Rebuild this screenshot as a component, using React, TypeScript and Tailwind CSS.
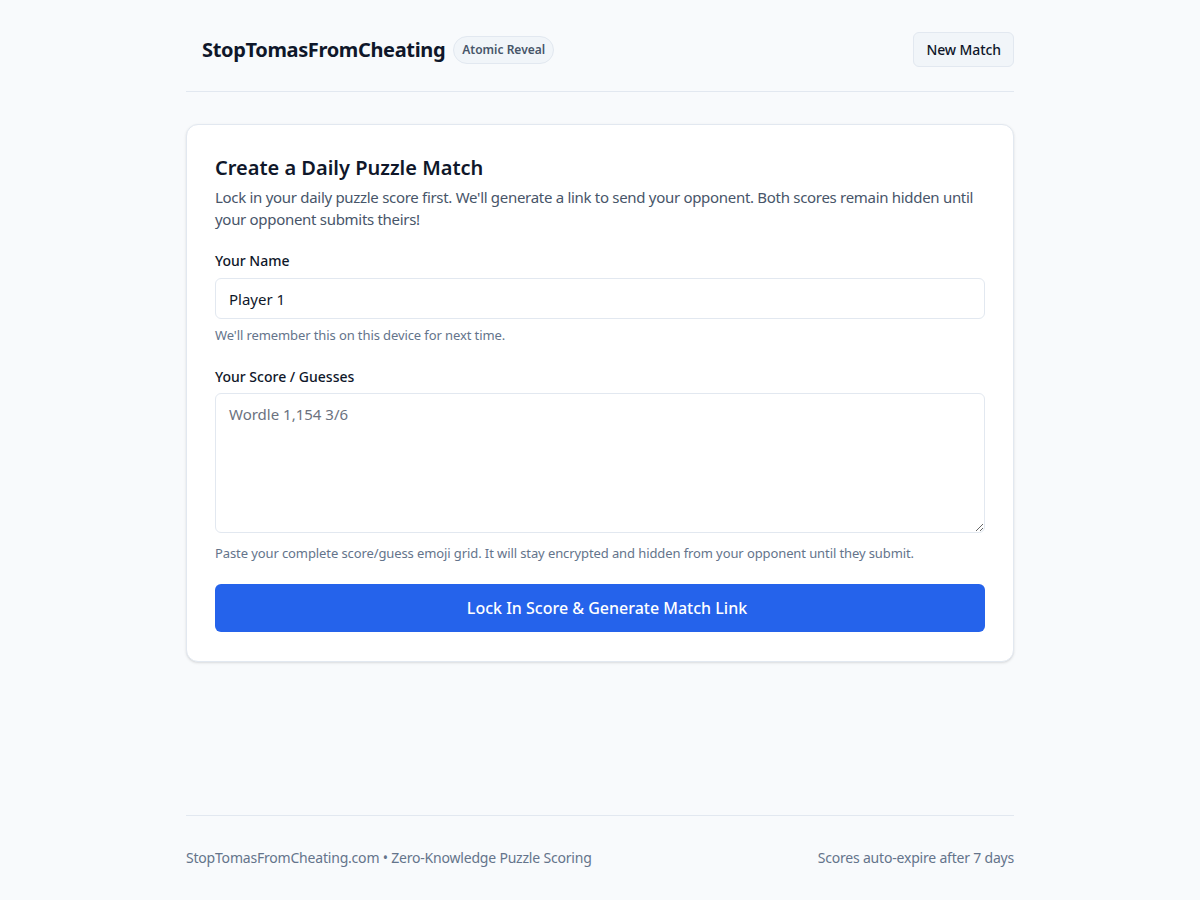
import { useState } from "react";

export default function App() {
  const [name, setName] = useState("Player 1");
  const [score, setScore] = useState("");

  return (
    <div
      className="min-h-screen flex flex-col bg-[#f8fafc] text-[#0f172a]"
      style={{ fontFamily: '"Noto Sans", "Open Sans", sans-serif' }}
    >
      <div className="w-[828px] mx-auto flex flex-col flex-1">
        {/* top bar */}
        <header className="flex items-center justify-between pt-8 pb-6 border-b border-[#e2e8f0]">
          <div className="flex items-center gap-2 pl-4">
            <h1 className="text-[20px] font-bold tracking-[-0.35px]">StopTomasFromCheating</h1>
            <span className="px-2 h-[28px] flex items-center rounded-full bg-[#f1f5f9] border border-[#e2e8f0] text-[12px] font-semibold text-[#475569]">
              Atomic Reveal
            </span>
          </div>
          <button className="h-[35px] px-[12px] rounded-md bg-[#f1f5f9] border border-[#e2e8f0] text-[14px] font-medium tracking-[-0.1px] text-[#0f172a]">
            New Match
          </button>
        </header>

        <main className="mt-8 flex-1">
          <div className="bg-white border border-[#e2e8f0] rounded-xl shadow-sm px-[28px] pt-[29px] pb-[29px]">
            <h2 className="text-[20px] font-semibold leading-[28px]">Create a Daily Puzzle Match</h2>
            <p className="mt-[4px] text-[15px] leading-[22px] tracking-[-0.3px] text-[#475569]">
              Lock in your daily puzzle score first. We'll generate a link to send your opponent. Both scores remain hidden until your opponent submits theirs!
            </p>

            <form className="mt-[21px]" onSubmit={(e) => e.preventDefault()}>
              <label className="block text-[14px] font-medium leading-[20px] text-[#0f172a]">Your Name</label>
              <input
                value={name}
                onChange={(e) => setName(e.target.value)}
                className="mt-[7px] block w-full h-[41px] px-[13px] rounded-md border border-[#e2e8f0] text-[15px] text-[#0f172a] outline-none"
              />
              <p className="mt-[7px] text-[13px] leading-[18px] tracking-[-0.1px] text-[#64748b]">We'll remember this on this device for next time.</p>

              <label className="mt-[23px] block text-[14px] font-medium leading-[20px] text-[#0f172a]">Your Score / Guesses</label>
              <textarea
                value={score}
                onChange={(e) => setScore(e.target.value)}
                placeholder="Wordle 1,154 3/6"
                className="mt-[6px] block w-full h-[140px] px-[13px] py-[9px] rounded-md border border-[#e2e8f0] text-[15px] leading-[22px] text-[#0f172a] placeholder:text-[#6b7280] outline-none"
              />
              <p className="mt-[11px] text-[13px] leading-[18px] tracking-[-0.1px] text-[#64748b]">
                Paste your complete score/guess emoji grid. It will stay encrypted and hidden from your opponent until they submit.
              </p>

              <button
                type="submit"
                className="mt-[22px] w-full h-[48px] pl-[14px] rounded-md bg-[#2563eb] text-white text-[16px] font-medium"
              >
                Lock In Score &amp; Generate Match Link
              </button>
            </form>
          </div>
        </main>

        <footer className="mt-auto border-t border-[#e2e8f0] py-8 flex items-center justify-between text-[14px] leading-[20px] tracking-[-0.2px] text-[#64748b]">
          <span>StopTomasFromCheating.com • Zero-Knowledge Puzzle Scoring</span>
          <span>Scores auto-expire after 7 days</span>
        </footer>
      </div>
    </div>
  );
}
